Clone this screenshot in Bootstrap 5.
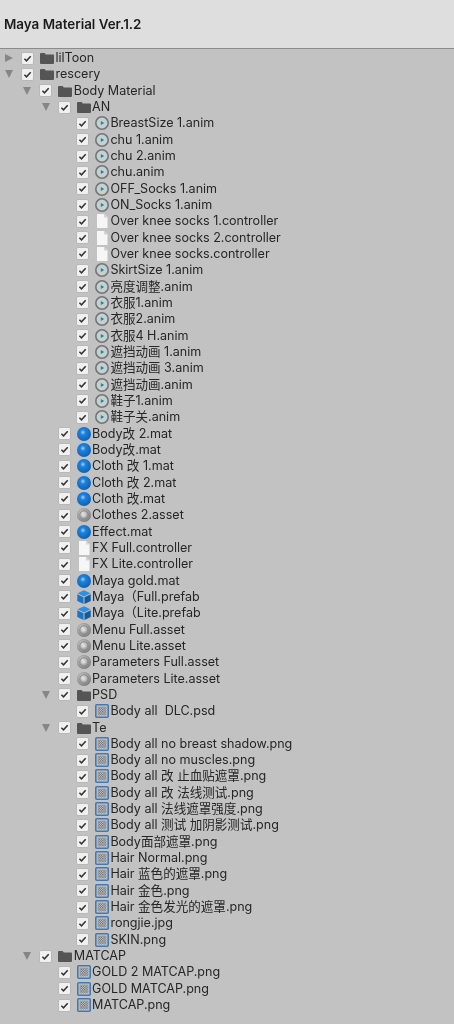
<!DOCTYPE html>
<html lang="zh">
<head>
<meta charset="utf-8">
<title>Maya Material Ver.1.2</title>
<link rel="stylesheet" href="https://cdn.jsdelivr.net/npm/bootstrap@5.3.0/dist/css/bootstrap.min.css">
<style>
body{background:#c2c2c2;font-family:Inter,"Noto Sans CJK SC",sans-serif;color:#262626;min-height:1024px;overflow:hidden}
.title-bar{height:49px;background:#dedede;border-bottom:1px solid #8b8b8b;padding:0 4px;font-size:13.4px;font-weight:600;color:#1c1c1c;filter:blur(.3px)}
.tree-list{padding-top:.9px;filter:blur(.3px)}
.tree-row{height:16.33px;font-size:12.55px;line-height:16px;white-space:nowrap}
.lvl1{padding-left:18.3px}.lvl2{padding-left:36.6px}.lvl3{padding-left:54.9px}
.slot{flex:0 0 21px;display:flex;padding-left:5px}
.slot svg{width:8px;height:8px;fill:#868686}
.tick.form-check-input{flex:none;width:13px;height:13px;margin:0;border:1px solid #b8b8b8;border-radius:2px;background-color:#f0f0f0;background-size:11px 11px;background-image:url("data:image/svg+xml,%3csvg xmlns='http://www.w3.org/2000/svg' viewBox='0 0 11 11'%3e%3cpath fill='none' stroke='%23333' stroke-width='1.5' d='M2.4 5.7l2.1 2.1 4.2-4.6'/%3e%3c/svg%3e")}
.ico{flex:none;width:14px;height:14px;margin-left:6px;overflow:visible}
.lbl{margin-left:1.5px}
.defs-holder{display:block;width:0;height:0}
</style>
</head>
<body>
<svg class="defs-holder" aria-hidden="true">
<defs>
<radialGradient id="gBlue" cx=".42" cy=".38" r=".62"><stop offset="0" stop-color="#a9d3f4"/><stop offset=".3" stop-color="#1f82dc"/><stop offset="1" stop-color="#0a63b8"/></radialGradient>
<radialGradient id="gGrey" cx=".42" cy=".4" r=".66"><stop offset="0" stop-color="#e6e6e6"/><stop offset=".55" stop-color="#a2a2a2"/><stop offset="1" stop-color="#727272"/></radialGradient>
<pattern id="chk" width="2.4" height="2.4" patternUnits="userSpaceOnUse"><rect width="2.4" height="2.4" fill="#dcdcdc"/><rect width="1.2" height="1.2" fill="#555"/><rect x="1.2" y="1.2" width="1.2" height="1.2" fill="#555"/></pattern>
</defs>
<symbol id="arrR" viewBox="0 0 8 8"><path d="M0 0l8 4-8 4z"/></symbol>
<symbol id="arrD" viewBox="0 0 8 8"><path d="M0 0h8L4 8z"/></symbol>
<symbol id="folder" viewBox="0 0 14 14"><path fill="#555" d="M0 3a1 1 0 0 1 1-1h3.6l1.2 1.5H13a1 1 0 0 1 1 1V12a1 1 0 0 1-1 1H1a1 1 0 0 1-1-1z"/></symbol>
<symbol id="anim" viewBox="0 0 14 14"><circle cx="7" cy="7" r="6.2" fill="#c6d0d0" stroke="#737777" stroke-width="1.6"/><path fill="#1a8a9b" d="M5.8 5L9.2 7l-3.4 2z"/></symbol>
<symbol id="file" viewBox="0 0 14 14"><path fill="#f6f6f6" d="M2 0h7l3.5 3.5V14H2z"/><path fill="#d4d4d4" d="M9 0l3.5 3.5H9z"/></symbol>
<symbol id="mat" viewBox="0 0 14 14"><circle cx="7" cy="7" r="7" fill="url(#gBlue)"/></symbol>
<symbol id="asset" viewBox="0 0 14 14"><circle cx="7" cy="7" r="7" fill="url(#gGrey)"/><circle cx="7" cy="7" r="4.2" fill="none" stroke="#858585" stroke-width="1"/><circle cx="7" cy="7" r="1.6" fill="#d8d8d8"/></symbol>
<symbol id="cube" viewBox="0 0 14 14"><path fill="#2f8fe0" d="M7 .2l6.5 3.1L7 6.4.5 3.3z"/><path fill="#1b74c4" d="M.3 4.2L6.5 7.3V14L.3 10.9z"/><path fill="#115c9f" d="M13.7 4.2L7.5 7.3V14L13.7 10.9z"/></symbol>
<symbol id="tex" viewBox="0 0 14 14"><rect x=".8" y=".8" width="12.4" height="12.4" rx="1" fill="#b9c9d8" stroke="#4678ab" stroke-width="1.6"/><rect x="2.6" y="2.6" width="8.8" height="8.8" fill="url(#chk)"/></symbol>
</svg>

<header class="title-bar d-flex align-items-center">Maya Material Ver.1.2</header>

<main class="tree-list">
<div class="tree-row d-flex align-items-center"><span class="slot"><svg><use href="#arrR"/></svg></span><input class="form-check-input tick" type="checkbox" checked><svg class="ico"><use href="#folder"/></svg><span class="lbl">lilToon</span></div>
<div class="tree-row d-flex align-items-center"><span class="slot"><svg><use href="#arrD"/></svg></span><input class="form-check-input tick" type="checkbox" checked><svg class="ico"><use href="#folder"/></svg><span class="lbl">rescery</span></div>
<div class="tree-row lvl1 d-flex align-items-center"><span class="slot"><svg><use href="#arrD"/></svg></span><input class="form-check-input tick" type="checkbox" checked><svg class="ico"><use href="#folder"/></svg><span class="lbl">Body Material</span></div>
<div class="tree-row lvl2 d-flex align-items-center"><span class="slot"><svg><use href="#arrD"/></svg></span><input class="form-check-input tick" type="checkbox" checked><svg class="ico"><use href="#folder"/></svg><span class="lbl">AN</span></div>
<div class="tree-row lvl3 d-flex align-items-center"><span class="slot"></span><input class="form-check-input tick" type="checkbox" checked><svg class="ico"><use href="#anim"/></svg><span class="lbl">BreastSize 1.anim</span></div>
<div class="tree-row lvl3 d-flex align-items-center"><span class="slot"></span><input class="form-check-input tick" type="checkbox" checked><svg class="ico"><use href="#anim"/></svg><span class="lbl">chu 1.anim</span></div>
<div class="tree-row lvl3 d-flex align-items-center"><span class="slot"></span><input class="form-check-input tick" type="checkbox" checked><svg class="ico"><use href="#anim"/></svg><span class="lbl">chu 2.anim</span></div>
<div class="tree-row lvl3 d-flex align-items-center"><span class="slot"></span><input class="form-check-input tick" type="checkbox" checked><svg class="ico"><use href="#anim"/></svg><span class="lbl">chu.anim</span></div>
<div class="tree-row lvl3 d-flex align-items-center"><span class="slot"></span><input class="form-check-input tick" type="checkbox" checked><svg class="ico"><use href="#anim"/></svg><span class="lbl">OFF_Socks 1.anim</span></div>
<div class="tree-row lvl3 d-flex align-items-center"><span class="slot"></span><input class="form-check-input tick" type="checkbox" checked><svg class="ico"><use href="#anim"/></svg><span class="lbl">ON_Socks 1.anim</span></div>
<div class="tree-row lvl3 d-flex align-items-center"><span class="slot"></span><input class="form-check-input tick" type="checkbox" checked><svg class="ico"><use href="#file"/></svg><span class="lbl">Over knee socks 1.controller</span></div>
<div class="tree-row lvl3 d-flex align-items-center"><span class="slot"></span><input class="form-check-input tick" type="checkbox" checked><svg class="ico"><use href="#file"/></svg><span class="lbl">Over knee socks 2.controller</span></div>
<div class="tree-row lvl3 d-flex align-items-center"><span class="slot"></span><input class="form-check-input tick" type="checkbox" checked><svg class="ico"><use href="#file"/></svg><span class="lbl">Over knee socks.controller</span></div>
<div class="tree-row lvl3 d-flex align-items-center"><span class="slot"></span><input class="form-check-input tick" type="checkbox" checked><svg class="ico"><use href="#anim"/></svg><span class="lbl">SkirtSize 1.anim</span></div>
<div class="tree-row lvl3 d-flex align-items-center"><span class="slot"></span><input class="form-check-input tick" type="checkbox" checked><svg class="ico"><use href="#anim"/></svg><span class="lbl">亮度调整.anim</span></div>
<div class="tree-row lvl3 d-flex align-items-center"><span class="slot"></span><input class="form-check-input tick" type="checkbox" checked><svg class="ico"><use href="#anim"/></svg><span class="lbl">衣服1.anim</span></div>
<div class="tree-row lvl3 d-flex align-items-center"><span class="slot"></span><input class="form-check-input tick" type="checkbox" checked><svg class="ico"><use href="#anim"/></svg><span class="lbl">衣服2.anim</span></div>
<div class="tree-row lvl3 d-flex align-items-center"><span class="slot"></span><input class="form-check-input tick" type="checkbox" checked><svg class="ico"><use href="#anim"/></svg><span class="lbl">衣服4 H.anim</span></div>
<div class="tree-row lvl3 d-flex align-items-center"><span class="slot"></span><input class="form-check-input tick" type="checkbox" checked><svg class="ico"><use href="#anim"/></svg><span class="lbl">遮挡动画 1.anim</span></div>
<div class="tree-row lvl3 d-flex align-items-center"><span class="slot"></span><input class="form-check-input tick" type="checkbox" checked><svg class="ico"><use href="#anim"/></svg><span class="lbl">遮挡动画 3.anim</span></div>
<div class="tree-row lvl3 d-flex align-items-center"><span class="slot"></span><input class="form-check-input tick" type="checkbox" checked><svg class="ico"><use href="#anim"/></svg><span class="lbl">遮挡动画.anim</span></div>
<div class="tree-row lvl3 d-flex align-items-center"><span class="slot"></span><input class="form-check-input tick" type="checkbox" checked><svg class="ico"><use href="#anim"/></svg><span class="lbl">鞋子1.anim</span></div>
<div class="tree-row lvl3 d-flex align-items-center"><span class="slot"></span><input class="form-check-input tick" type="checkbox" checked><svg class="ico"><use href="#anim"/></svg><span class="lbl">鞋子关.anim</span></div>
<div class="tree-row lvl2 d-flex align-items-center"><span class="slot"></span><input class="form-check-input tick" type="checkbox" checked><svg class="ico"><use href="#mat"/></svg><span class="lbl">Body改 2.mat</span></div>
<div class="tree-row lvl2 d-flex align-items-center"><span class="slot"></span><input class="form-check-input tick" type="checkbox" checked><svg class="ico"><use href="#mat"/></svg><span class="lbl">Body改.mat</span></div>
<div class="tree-row lvl2 d-flex align-items-center"><span class="slot"></span><input class="form-check-input tick" type="checkbox" checked><svg class="ico"><use href="#mat"/></svg><span class="lbl">Cloth 改 1.mat</span></div>
<div class="tree-row lvl2 d-flex align-items-center"><span class="slot"></span><input class="form-check-input tick" type="checkbox" checked><svg class="ico"><use href="#mat"/></svg><span class="lbl">Cloth 改 2.mat</span></div>
<div class="tree-row lvl2 d-flex align-items-center"><span class="slot"></span><input class="form-check-input tick" type="checkbox" checked><svg class="ico"><use href="#mat"/></svg><span class="lbl">Cloth 改.mat</span></div>
<div class="tree-row lvl2 d-flex align-items-center"><span class="slot"></span><input class="form-check-input tick" type="checkbox" checked><svg class="ico"><use href="#asset"/></svg><span class="lbl">Clothes 2.asset</span></div>
<div class="tree-row lvl2 d-flex align-items-center"><span class="slot"></span><input class="form-check-input tick" type="checkbox" checked><svg class="ico"><use href="#mat"/></svg><span class="lbl">Effect.mat</span></div>
<div class="tree-row lvl2 d-flex align-items-center"><span class="slot"></span><input class="form-check-input tick" type="checkbox" checked><svg class="ico"><use href="#file"/></svg><span class="lbl">FX Full.controller</span></div>
<div class="tree-row lvl2 d-flex align-items-center"><span class="slot"></span><input class="form-check-input tick" type="checkbox" checked><svg class="ico"><use href="#file"/></svg><span class="lbl">FX Lite.controller</span></div>
<div class="tree-row lvl2 d-flex align-items-center"><span class="slot"></span><input class="form-check-input tick" type="checkbox" checked><svg class="ico"><use href="#mat"/></svg><span class="lbl">Maya gold.mat</span></div>
<div class="tree-row lvl2 d-flex align-items-center"><span class="slot"></span><input class="form-check-input tick" type="checkbox" checked><svg class="ico"><use href="#cube"/></svg><span class="lbl">Maya（Full.prefab</span></div>
<div class="tree-row lvl2 d-flex align-items-center"><span class="slot"></span><input class="form-check-input tick" type="checkbox" checked><svg class="ico"><use href="#cube"/></svg><span class="lbl">Maya（Lite.prefab</span></div>
<div class="tree-row lvl2 d-flex align-items-center"><span class="slot"></span><input class="form-check-input tick" type="checkbox" checked><svg class="ico"><use href="#asset"/></svg><span class="lbl">Menu Full.asset</span></div>
<div class="tree-row lvl2 d-flex align-items-center"><span class="slot"></span><input class="form-check-input tick" type="checkbox" checked><svg class="ico"><use href="#asset"/></svg><span class="lbl">Menu Lite.asset</span></div>
<div class="tree-row lvl2 d-flex align-items-center"><span class="slot"></span><input class="form-check-input tick" type="checkbox" checked><svg class="ico"><use href="#asset"/></svg><span class="lbl">Parameters Full.asset</span></div>
<div class="tree-row lvl2 d-flex align-items-center"><span class="slot"></span><input class="form-check-input tick" type="checkbox" checked><svg class="ico"><use href="#asset"/></svg><span class="lbl">Parameters Lite.asset</span></div>
<div class="tree-row lvl2 d-flex align-items-center"><span class="slot"><svg><use href="#arrD"/></svg></span><input class="form-check-input tick" type="checkbox" checked><svg class="ico"><use href="#folder"/></svg><span class="lbl">PSD</span></div>
<div class="tree-row lvl3 d-flex align-items-center"><span class="slot"></span><input class="form-check-input tick" type="checkbox" checked><svg class="ico"><use href="#tex"/></svg><span class="lbl">Body all&nbsp; DLC.psd</span></div>
<div class="tree-row lvl2 d-flex align-items-center"><span class="slot"><svg><use href="#arrD"/></svg></span><input class="form-check-input tick" type="checkbox" checked><svg class="ico"><use href="#folder"/></svg><span class="lbl">Te</span></div>
<div class="tree-row lvl3 d-flex align-items-center"><span class="slot"></span><input class="form-check-input tick" type="checkbox" checked><svg class="ico"><use href="#tex"/></svg><span class="lbl">Body all no breast shadow.png</span></div>
<div class="tree-row lvl3 d-flex align-items-center"><span class="slot"></span><input class="form-check-input tick" type="checkbox" checked><svg class="ico"><use href="#tex"/></svg><span class="lbl">Body all no muscles.png</span></div>
<div class="tree-row lvl3 d-flex align-items-center"><span class="slot"></span><input class="form-check-input tick" type="checkbox" checked><svg class="ico"><use href="#tex"/></svg><span class="lbl">Body all 改 止血贴遮罩.png</span></div>
<div class="tree-row lvl3 d-flex align-items-center"><span class="slot"></span><input class="form-check-input tick" type="checkbox" checked><svg class="ico"><use href="#tex"/></svg><span class="lbl">Body all 改 法线测试.png</span></div>
<div class="tree-row lvl3 d-flex align-items-center"><span class="slot"></span><input class="form-check-input tick" type="checkbox" checked><svg class="ico"><use href="#tex"/></svg><span class="lbl">Body all 法线遮罩强度.png</span></div>
<div class="tree-row lvl3 d-flex align-items-center"><span class="slot"></span><input class="form-check-input tick" type="checkbox" checked><svg class="ico"><use href="#tex"/></svg><span class="lbl">Body all 测试 加阴影测试.png</span></div>
<div class="tree-row lvl3 d-flex align-items-center"><span class="slot"></span><input class="form-check-input tick" type="checkbox" checked><svg class="ico"><use href="#tex"/></svg><span class="lbl">Body面部遮罩.png</span></div>
<div class="tree-row lvl3 d-flex align-items-center"><span class="slot"></span><input class="form-check-input tick" type="checkbox" checked><svg class="ico"><use href="#tex"/></svg><span class="lbl">Hair Normal.png</span></div>
<div class="tree-row lvl3 d-flex align-items-center"><span class="slot"></span><input class="form-check-input tick" type="checkbox" checked><svg class="ico"><use href="#tex"/></svg><span class="lbl">Hair 蓝色的遮罩.png</span></div>
<div class="tree-row lvl3 d-flex align-items-center"><span class="slot"></span><input class="form-check-input tick" type="checkbox" checked><svg class="ico"><use href="#tex"/></svg><span class="lbl">Hair 金色.png</span></div>
<div class="tree-row lvl3 d-flex align-items-center"><span class="slot"></span><input class="form-check-input tick" type="checkbox" checked><svg class="ico"><use href="#tex"/></svg><span class="lbl">Hair 金色发光的遮罩.png</span></div>
<div class="tree-row lvl3 d-flex align-items-center"><span class="slot"></span><input class="form-check-input tick" type="checkbox" checked><svg class="ico"><use href="#tex"/></svg><span class="lbl">rongjie.jpg</span></div>
<div class="tree-row lvl3 d-flex align-items-center"><span class="slot"></span><input class="form-check-input tick" type="checkbox" checked><svg class="ico"><use href="#tex"/></svg><span class="lbl">SKIN.png</span></div>
<div class="tree-row lvl1 d-flex align-items-center"><span class="slot"><svg><use href="#arrD"/></svg></span><input class="form-check-input tick" type="checkbox" checked><svg class="ico"><use href="#folder"/></svg><span class="lbl">MATCAP</span></div>
<div class="tree-row lvl2 d-flex align-items-center"><span class="slot"></span><input class="form-check-input tick" type="checkbox" checked><svg class="ico"><use href="#tex"/></svg><span class="lbl">GOLD 2 MATCAP.png</span></div>
<div class="tree-row lvl2 d-flex align-items-center"><span class="slot"></span><input class="form-check-input tick" type="checkbox" checked><svg class="ico"><use href="#tex"/></svg><span class="lbl">GOLD MATCAP.png</span></div>
<div class="tree-row lvl2 d-flex align-items-center"><span class="slot"></span><input class="form-check-input tick" type="checkbox" checked><svg class="ico"><use href="#tex"/></svg><span class="lbl">MATCAP.png</span></div>
</main>
</body>
</html>
